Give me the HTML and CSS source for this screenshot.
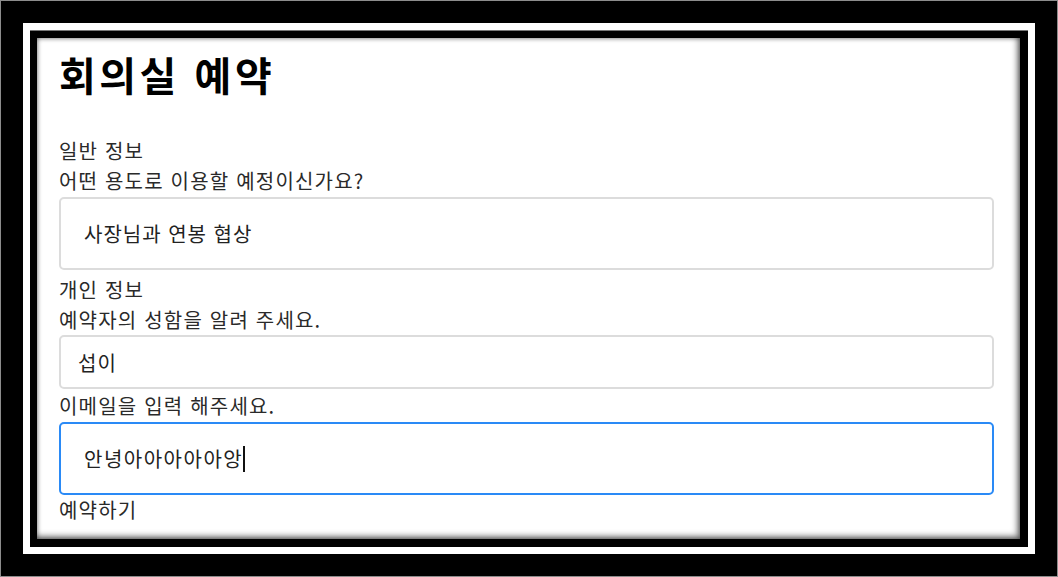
FILE: index.html
```html
<!DOCTYPE html>
<html lang="ko">
<head>
<meta charset="utf-8">
<title>회의실 예약</title>
<link rel="stylesheet" href="styles.css">
</head>
<body>
<div class="frame">
  <div class="mat">
    <div class="bezel">
      <div class="page">
        <h1 class="title">회의실 예약</h1>
        <div class="section">일반 정보</div>
        <div class="label">어떤 용도로 이용할 예정이신가요?</div>
        <div class="field field-tall field-first">사장님과 연봉 협상</div>
        <div class="section">개인 정보</div>
        <div class="label">예약자의 성함을 알려 주세요.</div>
        <div class="field field-short">섭이</div>
        <div class="label label-email">이메일을 입력 해주세요.</div>
        <div class="field field-tall field-focus">안녕아아아아아앙<span class="caret"></span></div>
        <div class="label">예약하기</div>
      </div>
    </div>
  </div>
</div>
</body>
</html>
```

FILE: styles.css
```css
* { box-sizing: border-box; }
html, body { margin: 0; padding: 0; background: #000; }
body {
  width: 1058px;
  height: 577px;
  font-family: "Noto Sans CJK KR", "Noto Sans", sans-serif;
}
.frame {
  width: 1058px;
  height: 577px;
  border: 1px solid #8c8c8c;
  background: #000;
  padding: 22px;
}
.mat {
  height: 100%;
  background: #fff;
  padding: 7px;
}
.bezel {
  height: 100%;
  background: #000;
  padding: 7px 8px 8px 7px;
  border-top: 1px solid #777;
}
.page {
  height: 100%;
  background: #fff;
  padding: 6px 26px 0 22px;
  box-shadow: inset 0 0 5px rgba(0,0,0,0.55), inset -3px -3px 6px rgba(0,0,0,0.45);
  color: #222;
  overflow: hidden;
}
.title {
  margin: 0 0 32px 0;
  font-size: 40px;
  line-height: 60px;
  font-weight: 700;
  color: #000;
  letter-spacing: 3.5px;
}
.section, .label {
  font-size: 20px;
  line-height: 30px;
  color: #2a2a2a;
  letter-spacing: 1.2px;
}
.field {
  border: 2px solid #dcdcdc;
  border-radius: 5px;
  font-size: 20px;
  color: #222;
  display: flex;
  align-items: center;
  letter-spacing: 1px;
}
.field-tall {
  height: 73px;
  padding-left: 23px;
}
.field-short {
  height: 54px;
  padding-left: 17px;
}
.field-first { margin-top: 1px; margin-bottom: 5px; }
.label-email { margin-top: 2px; margin-bottom: 1px; }
.field-focus {
  border-color: #2a8af6;
  letter-spacing: 1.5px;
}
.caret {
  display: inline-block;
  width: 2px;
  height: 26px;
  background: #111;
  margin-left: 0;
}
```
